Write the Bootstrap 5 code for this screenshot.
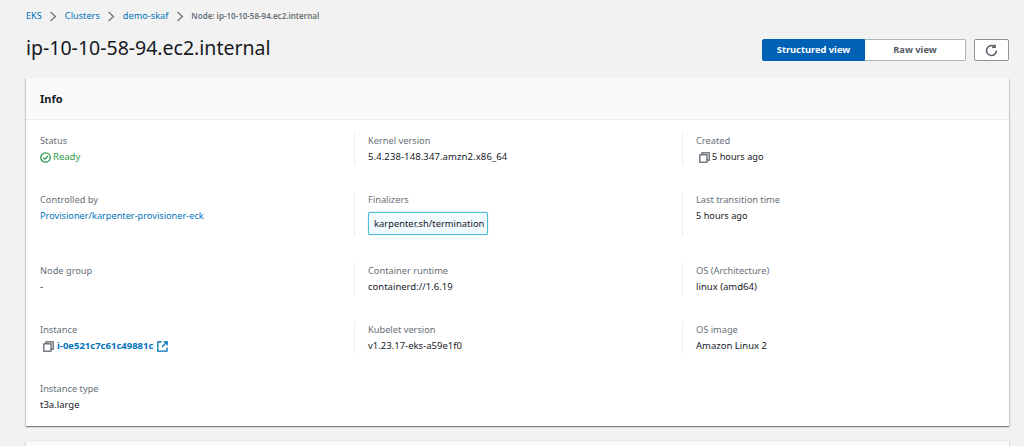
<!DOCTYPE html>
<html lang="en"><head><meta charset="utf-8"><title>Node</title>
<link href="https://cdn.jsdelivr.net/npm/bootstrap@5.3.0/dist/css/bootstrap.min.css" rel="stylesheet">
<style>
html,body{height:446px;overflow:hidden}
body{background:#f2f2f2;font-family:"Noto Sans",sans-serif;font-size:9.5px;line-height:16px;color:#16191f}
.page-wrap{padding:7px 15px 0 26px}
.crumbs{height:18px;gap:7.5px;font-size:9.2px;color:#687078}
.crumbs a,.link-val{color:#0073bb;text-decoration:none}
.crumbs svg{width:8px;height:11px}
.crumb-now{font-size:8px;font-weight:600}
.head-row{height:50px;margin-bottom:3px}
.page-title{font-size:19.5px;font-weight:400;line-height:24px;margin:0 0 4px;color:#16191f}
.seg{width:204px;height:22px;margin-right:8px}
.seg-btn{flex:1;font-size:9.3px;font-weight:700;line-height:18px;padding:0;border:1px solid #aab7b8;background:#fff;color:#545b64;border-radius:0}
.seg-on{flex:0 0 103px;background:#0061b5;border-color:#0061b5;color:#fff;border-radius:2px 0 0 2px}
.seg-off{border-left:0;border-radius:0 2px 2px 0}
.refresh{width:35px;height:22px;padding:0;border:1px solid #879596;border-radius:2px;background:#fff;display:flex;align-items:center;justify-content:center}
.info-card{background:#fff;border:0;border-radius:0;box-shadow:0 1px 1px 0 rgba(0,0,0,.3),1px 1px 1px 0 rgba(0,0,0,.13),-1px 1px 1px 0 rgba(0,0,0,.13);height:348px}
.info-head{height:43px;background:#fafafa;border-bottom:1px solid #eaeded;padding:0 14px;font-size:11px;font-weight:700;line-height:41px}
.info-body{padding:13px 14px 0}
.info-row{display:grid;grid-template-columns:328px 328px 1fr;height:59px}
.info-row.tall{height:71px}
.cell{height:32px}
.cell-tall{height:44px}
.cell+.cell{border-left:1px solid #eaeded;padding-left:13px;margin-left:-14px}
.lbl{color:#687078;line-height:16px;font-size:9.25px}
.ok{color:#2b9a47}
.link-prov{font-size:9.2px}
.link-bold{font-weight:700}
.val-kernel{letter-spacing:.1px}
.val-time{font-size:9.2px}
.tag-box{display:inline-block;width:120px;border:1px solid #4fbdd3;background:#f1faff;border-radius:2px;height:23px;line-height:21px;padding:0 0 0 5px;margin-top:4px;white-space:nowrap;font-size:9.4px;box-shadow:0 0 1px #4fbdd3}
.ico{width:11px;height:11px;flex:none}
.gap-ico{gap:3px}
.gap-tight{gap:2px}
.inset-ico{padding-left:3px}
.ext-ico{margin-left:1px}
.next-card{background:#fafafa;height:5px;margin-top:15px;box-shadow:1px 0 1px rgba(0,0,0,.1),-1px 0 1px rgba(0,0,0,.1)}
</style></head><body>
<div class="page-wrap">
<nav class="crumbs d-flex align-items-center">
<a href="#">EKS</a><svg viewBox="0 0 8 11"><path d="M1.5 1 6.5 5.5 1.5 10" fill="none" stroke="#687078" stroke-width="1.2"/></svg>
<a href="#">Clusters</a><svg viewBox="0 0 8 11"><path d="M1.5 1 6.5 5.5 1.5 10" fill="none" stroke="#687078" stroke-width="1.2"/></svg>
<a href="#">demo-skaf</a><svg viewBox="0 0 8 11"><path d="M1.5 1 6.5 5.5 1.5 10" fill="none" stroke="#687078" stroke-width="1.2"/></svg>
<span class="crumb-now">Node: ip-10-10-58-94.ec2.internal</span>
</nav>
<div class="head-row d-flex align-items-center justify-content-between">
<h1 class="page-title">ip-10-10-58-94.ec2.internal</h1>
<div class="d-flex">
<div class="seg d-flex"><button class="seg-btn seg-on">Structured view</button><button class="seg-btn seg-off">Raw view</button></div>
<button class="refresh" aria-label="Refresh"><svg width="13" height="13" viewBox="0 0 13 13" fill="none" stroke="#545b64" stroke-width="1.5"><path d="M11.5 6.5A5 5 0 1 1 9.4 2.4"/><path d="M10 0.5V3.2H7.2"/></svg></button>
</div></div>
<section class="info-card card">
<div class="info-head">Info</div>
<div class="info-body">
<div class="info-row">
<div class="cell"><div class="lbl">Status</div><div class="ok d-flex align-items-center gap-tight"><svg class="ico" viewBox="0 0 11 11" fill="none" stroke="#2b9a47" stroke-width="1.3"><circle cx="5.5" cy="5.5" r="4.7"/><path d="M3.2 5.6l1.7 1.6 3-3.2"/></svg>Ready</div></div>
<div class="cell"><div class="lbl">Kernel version</div><div class="val-kernel">5.4.238-148.347.amzn2.x86_64</div></div>
<div class="cell"><div class="lbl">Created</div><div class="d-flex align-items-center gap-tight inset-ico val-time"><svg class="ico" viewBox="0 0 11 11" fill="none" stroke="#545b64" stroke-width="1.2"><rect x=".8" y="2.8" width="7.2" height="7.4"/><path d="M3 2.8V.8h7.2v7.4H8"/></svg>5 hours ago</div></div>
</div>
<div class="info-row tall">
<div class="cell cell-tall"><div class="lbl">Controlled by</div><div><a class="link-val link-prov" href="#">Provisioner/karpenter-provisioner-eck</a></div></div>
<div class="cell cell-tall"><div class="lbl">Finalizers</div><span class="tag-box">karpenter.sh/termination</span></div>
<div class="cell cell-tall"><div class="lbl">Last transition time</div><div class="val-time">5 hours ago</div></div>
</div>
<div class="info-row">
<div class="cell"><div class="lbl">Node group</div><div>-</div></div>
<div class="cell"><div class="lbl">Container runtime</div><div>containerd://1.6.19</div></div>
<div class="cell"><div class="lbl">OS (Architecture)</div><div>linux (amd64)</div></div>
</div>
<div class="info-row">
<div class="cell"><div class="lbl">Instance</div><div class="d-flex align-items-center gap-ico inset-ico"><svg class="ico" viewBox="0 0 11 11" fill="none" stroke="#545b64" stroke-width="1.2"><rect x=".8" y="2.8" width="7.2" height="7.4"/><path d="M3 2.8V.8h7.2v7.4H8"/></svg><a class="link-val link-bold" href="#">i-0e521c7c61c49881c</a><svg class="ico ext-ico" viewBox="0 0 11 11" fill="none" stroke="#0073bb" stroke-width="1.3"><path d="M4.5 1H.8v9.2H10V6.5"/><path d="M6.5.8h3.7v3.7M10 1 5 6"/></svg></div></div>
<div class="cell"><div class="lbl">Kubelet version</div><div>v1.23.17-eks-a59e1f0</div></div>
<div class="cell"><div class="lbl">OS image</div><div>Amazon Linux 2</div></div>
</div>
<div class="info-row">
<div class="cell"><div class="lbl">Instance type</div><div>t3a.large</div></div>
</div>
</div>
</section>
<div class="next-card"></div>
</div>
</body></html>
